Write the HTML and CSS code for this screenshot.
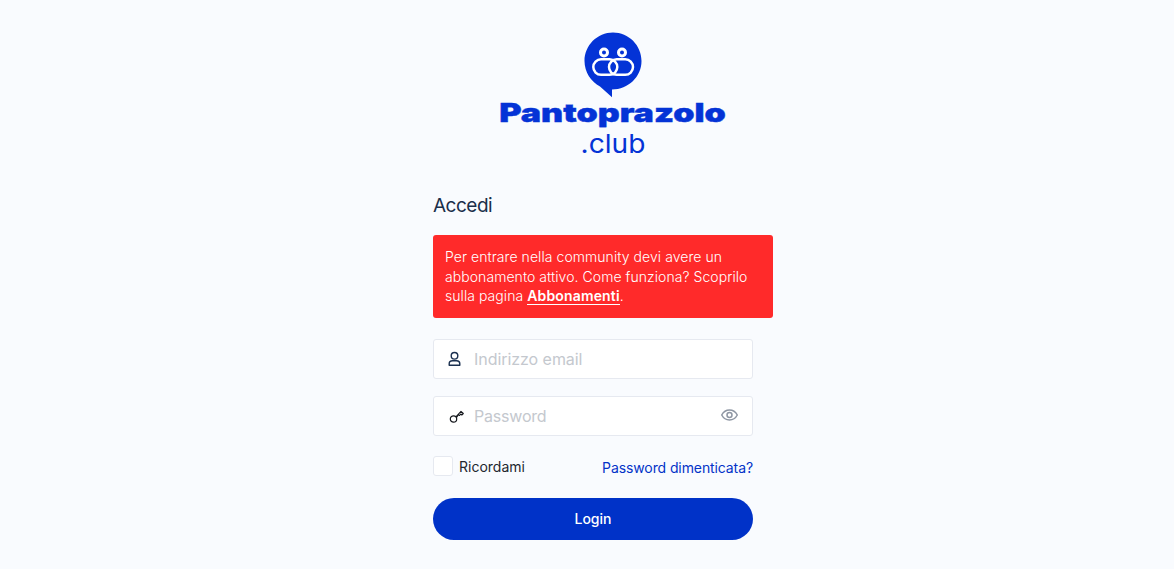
FILE: index.html
```html
<!DOCTYPE html>
<html lang="it">
<head>
    <meta charset="UTF-8">
    <meta name="viewport" content="width=device-width, initial-scale=1.0">
    <title>Accedi - Pantoprazolo.club</title>
    <link rel="stylesheet" href="styles.css">
</head>
<body>
    <div class="page">
        <div class="logo">
            <svg class="logo-mark" width="58" height="66" viewBox="0 0 58 66" aria-hidden="true">
                <path class="mark-bubble" d="M29 0.500C13.300 0.500 0.500 13.300 0.500 29C0.500 40.200 7 49.800 16 54.400L28 65.300L28 57.500C44.200 57.500 57.500 44.700 57.500 29C57.500 13.300 44.700 0.500 29 0.500Z"/>
                <circle class="mark-eye" cx="20" cy="20.500" r="3.500"/>
                <circle class="mark-eye" cx="38" cy="20.500" r="3.500"/>
                <rect class="mark-line" x="9.300" y="27.300" width="24" height="15.500" rx="7.750"/>
                <rect class="mark-line" x="25" y="27.300" width="24" height="15.500" rx="7.750"/>
            </svg>
            <div class="logo-name"><span>Pantoprazolo</span></div>
            <div class="logo-tld"><span>.club</span></div>
        </div>

        <form class="login-form">
            <h1>Accedi</h1>

            <div class="alert">
                Per entrare nella community devi avere un abbonamento attivo. Come funziona? Scoprilo sulla pagina <a href="#">Abbonamenti</a>.
            </div>

            <div class="fields">
                <label class="field">
                    <svg class="field-icon" width="16" height="16" viewBox="1.500 0 16 16" aria-hidden="true">
                        <circle cx="8" cy="4.800" r="3.300" fill="none" stroke="#1b3050" stroke-width="1.400"/>
                        <path d="M2.700 14.300V12.800C2.700 10.900 4.200 9.800 6 9.800H10C11.800 9.800 13.300 10.900 13.300 12.800V14.300Z" fill="none" stroke="#1b3050" stroke-width="1.400" stroke-linejoin="round"/>
                    </svg>
                    <input type="text" placeholder="Indirizzo email">
                </label>

                <label class="field">
                    <svg class="field-icon" width="16" height="16" viewBox="0 0 16 16" aria-hidden="true">
                        <circle cx="5.500" cy="11" r="3.200" fill="none" stroke="#15181d" stroke-width="1.200"/>
                        <path d="M7.900 8.800L13 3.400L15.300 5.500L13.800 7L12.800 6L11.600 7.500L10.600 6.600L8.500 9.500" fill="none" stroke="#15181d" stroke-width="1.100" stroke-linejoin="round"/>
                    </svg>
                    <input class="password-input" type="password" placeholder="Password">
                    <svg class="eye-icon" width="18" height="18" viewBox="0.500 1 18 18" aria-hidden="true">
                        <path d="M1.200 9C3 5.700 5.700 4 9 4C12.300 4 15 5.700 16.800 9C15 12.300 12.300 14 9 14C5.700 14 3 12.300 1.200 9Z" fill="none" stroke="#8e96a3" stroke-width="1.500" stroke-linejoin="round"/>
                        <circle cx="9" cy="9" r="2.500" fill="none" stroke="#8e96a3" stroke-width="1.500"/>
                    </svg>
                </label>
            </div>

            <div class="options">
                <label class="remember">
                    <span class="checkbox"></span>
                    <span class="remember-text">Ricordami</span>
                </label>
                <a class="forgot" href="#">Password dimenticata?</a>
            </div>

            <button class="login-btn" type="button">Login</button>
        </form>
    </div>
</body>
</html>
```

FILE: styles.css
```css
* {
    box-sizing: border-box;
}
body {
    margin: 0;
    padding: 0;
    background-color: #f9fbfe;
    font-family: Inter, 'Liberation Sans', sans-serif;
    color: #1b2f4a;
}
.page {
    width: 360px;
    margin-left: 433px;
    padding-top: 32px;
}

/* Logo */
.logo {
    display: flex;
    flex-direction: column;
    align-items: center;
}
.logo-mark {
    display: block;
}
.mark-bubble {
    fill: #0433d6;
}
.mark-line,
.mark-eye {
    fill: none;
    stroke: #ffffff;
}
.mark-line {
    stroke-width: 2.500;
}
.mark-eye {
    stroke-width: 3;
}
.logo-name {
    height: 30px;
    color: #0433d6;
    font-size: 26px;
    line-height: 30px;
    font-weight: 900;
    white-space: nowrap;
    -webkit-text-stroke: 0.400px #0433d6;
}
.logo-name span {
    display: inline-block;
    transform: scaleX(1.310);
}
.logo-tld {
    height: 32px;
    color: #0433d6;
    font-size: 26px;
    line-height: 32px;
    font-weight: 400;
}
.logo-tld span {
    display: inline-block;
    transform: scaleX(1.080);
}

/* Form */
.login-form {
    width: 340px;
    margin-top: 33px;
}
h1 {
    margin: 0;
    font-size: 19px;
    line-height: 26px;
    font-weight: 400;
    letter-spacing: -0.500px;
}
.alert {
    margin-top: 16px;
    padding: 12px;
    background-color: #ff2a2a;
    border-radius: 3px;
    color: #ffffff;
    font-size: 14px;
    line-height: 1.400;
    font-weight: 350;
    letter-spacing: 0.060px;
}
.alert a {
    color: #ffffff;
    font-weight: 600;
    letter-spacing: 0.150px;
    text-decoration: none;
    border-bottom: 1px solid #ffffff;
}
.fields {
    display: flex;
    flex-direction: column;
    gap: 17px;
    width: 320px;
    margin-top: 21px;
}
.field {
    display: flex;
    align-items: center;
    height: 40px;
    padding: 0 14px;
    background-color: #ffffff;
    border: 1px solid #e6e9f0;
    border-radius: 3px;
}
.field-icon {
    flex: none;
    margin-right: 10px;
}
.field input {
    flex: 1;
    min-width: 0;
    padding: 0;
    border: none;
    outline: none;
    background: transparent;
    font-family: inherit;
    font-size: 16px;
    letter-spacing: -0.050px;
}
.field .password-input {
    letter-spacing: -0.200px;
}
.field input::placeholder {
    color: #c4c8ce;
    opacity: 1;
}
.eye-icon {
    flex: none;
    margin-right: -1px;
}
.options {
    display: flex;
    justify-content: space-between;
    align-items: center;
    width: 320px;
    height: 20px;
    margin-top: 20px;
    font-size: 14px;
}
.remember {
    display: flex;
    align-items: center;
    gap: 6px;
    color: #23272e;
}
.remember-text {
    padding-top: 1px;
}
.checkbox {
    width: 20px;
    height: 20px;
    background-color: #ffffff;
    border: 1px solid #e6e9f0;
    border-radius: 3px;
}
.forgot {
    padding-top: 3px;
    color: #0433c8;
    letter-spacing: -0.100px;
    text-decoration: none;
}
.login-btn {
    display: block;
    width: 320px;
    height: 42px;
    margin-top: 22px;
    border: none;
    border-radius: 21px;
    background-color: #0032c8;
    color: #ffffff;
    font-family: inherit;
    font-size: 14px;
    font-weight: 500;
    cursor: pointer;
}
```
